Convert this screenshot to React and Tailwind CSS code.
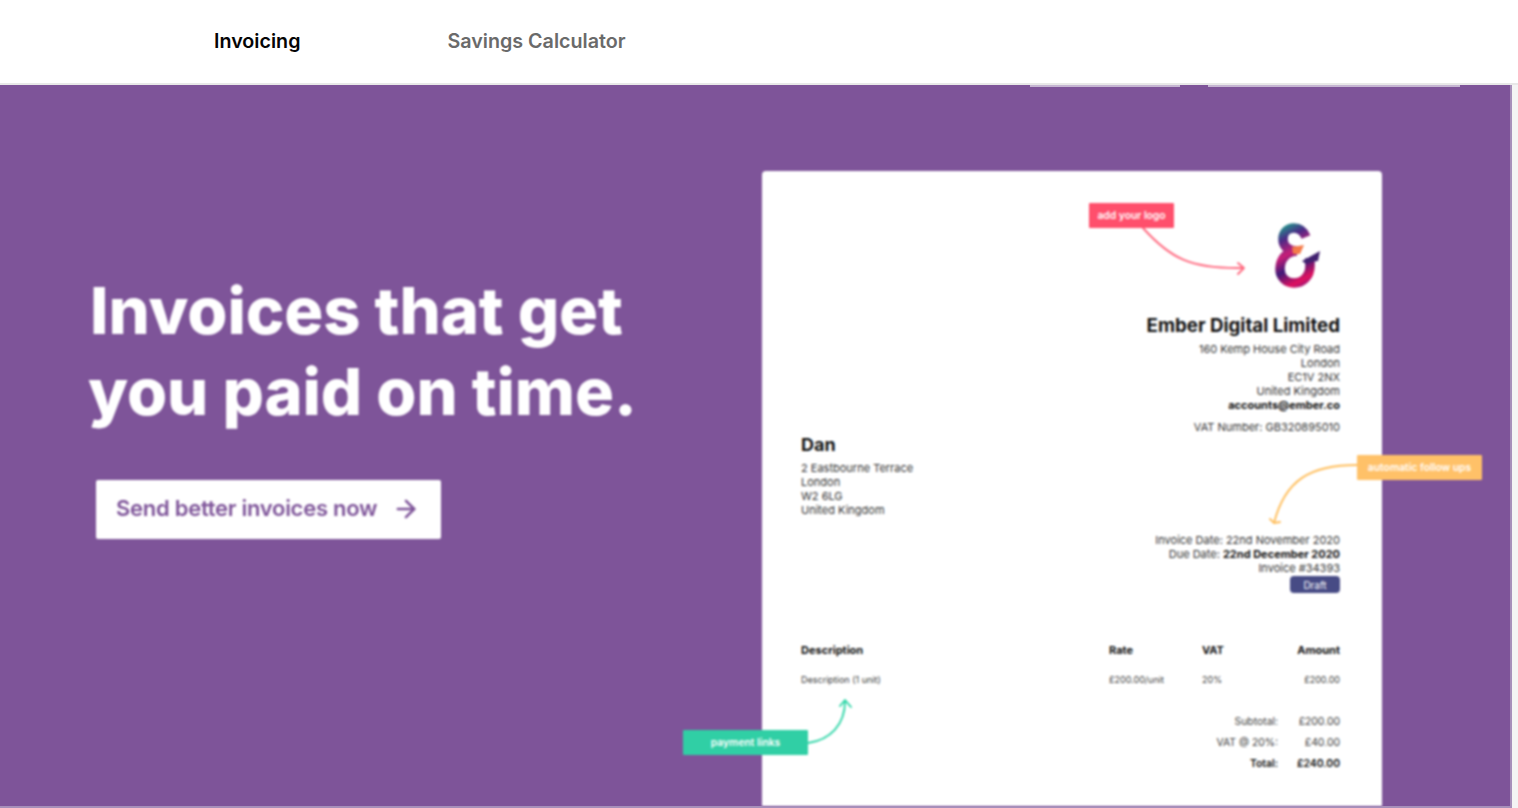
import React from "react";
import { ArrowRight } from "lucide-react";

const Logo = () => (
  <svg width="90" height="90" viewBox="0 0 90 90" fill="none">
    <defs>
      <linearGradient id="amp" gradientUnits="userSpaceOnUse" x1="30" y1="16" x2="62" y2="76">
        <stop offset="0" stopColor="#1f9e8c" />
        <stop offset="0.2" stopColor="#4a2b86" />
        <stop offset="0.42" stopColor="#c81e78" />
        <stop offset="0.62" stopColor="#3f1a78" />
        <stop offset="0.85" stopColor="#e0105f" />
        <stop offset="1" stopColor="#7a1a80" />
      </linearGradient>
    </defs>
    <path d="M56 27C53 20 48 18 44 18C37 18 33 23 33 29C33 36 38 41 47 41C37 41 30 49 30 59C30 67 36 73 44 73C53 73 60 66 60 56V48" stroke="url(#amp)" strokeWidth="9.5" />
    <path d="M52 51L70 41L68 51C65 51 60 52 56 54Z" fill="#40206f" />
    <path d="M42 37L54 35L50 44L43 44Z" fill="#f47b4a" />
  </svg>
);

const Tag = ({ className, children }) => (
  <div className={"absolute flex h-[25px] items-center justify-center rounded-[1px] pb-[2px] text-[10.3px] font-semibold text-white " + className}>{children}</div>
);

export default function App() {
  return (
    <div className="flex h-[808px] w-[1518px] flex-col overflow-hidden bg-[#f4f4f4] font-['Inter',sans-serif]">
      <header className="flex h-[85px] shrink-0 items-center gap-[147px] border-b-2 border-[#e8e8e8] bg-white pl-[214px] text-[19.7px] font-semibold">
        <span className="text-[#050505]">Invoicing</span>
        <span className="text-[#6a6a6a]">Savings Calculator</span>
      </header>
      <main className="mr-[6px] flex h-[723px] shrink-0 flex-col overflow-hidden border-r-2 border-b-2 border-[#a78fba] bg-[#7e5499]">
        <div className="flex h-[2px] shrink-0 gap-[28px] pl-[1030px]">
          <div className="h-[2px] w-[150px] bg-[#c5b5d2]" />
          <div className="h-[2px] w-[252px] bg-[#c5b5d2]" />
        </div>
        <div className="flex min-h-0 flex-1">
          <section className="w-[762px] shrink-0 pt-[183px] pl-[90px] blur-[0.9px]">
            <h1 className="text-[65px] leading-[81px] font-extrabold tracking-[-0.1px] whitespace-nowrap text-white">
              Invoices that get
              <br />
              <span className="-ml-[2px]">you paid on time.</span>
            </h1>
            <a className="mt-[48px] ml-[6px] flex h-[59px] w-[345px] items-center gap-[15px] rounded-[2px] bg-white pb-[2px] pl-[20px] text-[22px] font-semibold tracking-[-0.27px] text-[#7e5499]">
              Send better invoices now
              <ArrowRight size={28} strokeWidth={2.2} />
            </a>
          </section>
          <section className="relative mt-[84px] w-[620px] shrink-0 rounded-t-[4px] bg-white pt-[51px] pr-[42px] pl-[39px] text-[11px] leading-[14px] text-[#333333] blur-[0.9px]">
            <div className="flex justify-between">
              <div className="pt-[211px]">
                <div className="text-[18px] leading-[24px] font-bold text-[#111111]">Dan</div>
                <div className="mt-[4px]">
                  <div>2 Eastbourne Terrace</div>
                  <div>London</div>
                  <div>W2 6LG</div>
                  <div>United Kingdom</div>
                </div>
              </div>
              <div className="flex flex-col items-end text-right">
                <div className="-mt-[12px] -mb-[12px] h-[90px]"><Logo /></div>
                <div className="mt-[26px] text-[18.7px] leading-[24px] font-bold text-[#111111]">Ember Digital Limited</div>
                <div className="mt-[4px]">160 Kemp House City Road</div>
                <div>London</div>
                <div>EC1V 2NX</div>
                <div>United Kingdom</div>
                <div className="font-bold text-[#111111]">accounts@ember.co</div>
                <div className="mt-[8px]">VAT Number: GB320895010</div>
                <div className="mt-[99px]">Invoice Date: 22nd November 2020</div>
                <div>Due Date: <span className="font-bold text-[#111111]">22nd December 2020</span></div>
                <div>Invoice #34393</div>
                <div className="mt-[1px] flex h-[17px] w-[50px] items-center justify-center rounded-[4px] bg-[#474b85] text-[10px] text-white">Draft</div>
              </div>
            </div>
            <div className="mt-[50px] grid grid-cols-[308px_93px_1fr_auto] text-[11px] font-bold text-[#111111]">
              <div>Description</div>
              <div>Rate</div>
              <div>VAT</div>
              <div>Amount</div>
            </div>
            <div className="mt-[16px] grid grid-cols-[308px_93px_1fr_auto] text-[9px] text-[#3a3a3a]">
              <div>Description (1 unit)</div>
              <div>£200.00/unit</div>
              <div>20%</div>
              <div>£200.00</div>
            </div>
            <div className="mt-[28px] flex flex-col gap-[7px] text-[10.4px] text-[#3a3a3a]">
              <div className="flex justify-end"><span>Subtotal:</span><span className="w-[62px] text-right">£200.00</span></div>
              <div className="flex justify-end"><span>VAT @ 20%:</span><span className="w-[62px] text-right">£40.00</span></div>
              <div className="flex justify-end font-semibold text-[#111111]"><span>Total:</span><span className="w-[62px] text-right">£240.00</span></div>
            </div>
            <svg className="pointer-events-none absolute top-0 left-0" width="620" height="640" viewBox="762 171 620 640" fill="none" overflow="visible" strokeWidth="1.9" strokeLinecap="round" strokeLinejoin="round">
              <path d="M1143 228C1170 258 1190 269 1243 268M1238 263L1244 268L1238 274" stroke="#ff6a80" />
              <path d="M1357 465C1310 465 1285 480 1274 523M1270 519L1274 523L1280 522" stroke="#ffbe5c" />
              <path d="M808 743C830 740 845 725 845 701M840 706L845 700L851 707" stroke="#30d6a8" />
            </svg>
            <Tag className="top-[32px] left-[327px] w-[85px] bg-[#ff4f6c]">add your logo</Tag>
            <Tag className="top-[284px] left-[595px] w-[125px] bg-[#ffc168]">automatic follow ups</Tag>
            <Tag className="top-[559px] -left-[79px] w-[125px] bg-[#30cfa5]">payment links</Tag>
          </section>
        </div>
      </main>
    </div>
  );
}
